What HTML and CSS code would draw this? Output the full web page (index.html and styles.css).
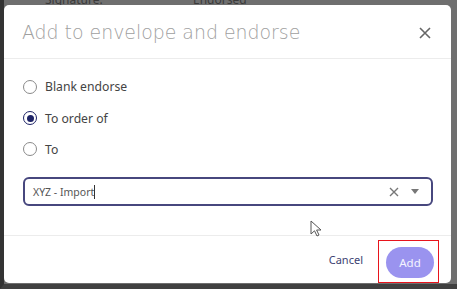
FILE: index.html
```html
<!DOCTYPE html>
<html lang="en">
<head>
    <meta charset="UTF-8">
    <meta name="viewport" content="width=device-width, initial-scale=1.0">
    <title>Add to envelope and endorse</title>
    <link rel="stylesheet" href="styles.css">
</head>
<body>
    <div class="page">
        <div class="page-row"><span class="page-label">Signature:</span><span class="page-value">Endorsed</span></div>
    </div>

    <div class="dialog">
        <div class="dialog-header">
            <h2 class="dialog-title">Add to envelope and endorse</h2>
            <svg class="close" width="12" height="12" viewBox="0 0 12 12"><path d="M1 1L11 11M11 1L1 11" stroke="#666" stroke-width="1.6"/></svg>
        </div>
        <div class="dialog-body">
            <label class="radio"><span class="dot"></span>Blank endorse</label>
            <label class="radio checked"><span class="dot"></span>To order of</label>
            <label class="radio"><span class="dot"></span>To</label>
            <div class="select">
                <span class="select-text">XYZ - Import<span class="caret"></span></span>
                <svg class="clear" width="10" height="10" viewBox="0 0 10 10"><path d="M1 1L9 9M9 1L1 9" stroke="#777" stroke-width="1.4"/></svg>
                <svg class="arrow" width="8" height="5" viewBox="0 0 8 5"><path d="M0 0H8L4 5Z" fill="#777"/></svg>
            </div>
        </div>
        <div class="dialog-footer">
            <button class="btn-cancel">Cancel</button>
            <div class="highlight"><button class="btn-add">Add</button></div>
        </div>
    </div>

    <svg class="cursor" width="12" height="17" viewBox="0 0 12 17"><path d="M1 1V14L4.5 10.8L7 16L9 15L6.6 10H11Z" fill="#fff" stroke="#555" stroke-width="1"/></svg>
</body>
</html>
```

FILE: styles.css
```css
html, body { margin: 0; height: 100%; }
body { background: #6f6f6f; font-family: 'Noto Sans', sans-serif; overflow: hidden; position: relative; border-left: 4px solid #333; border-bottom: 5px solid #404040; box-sizing: border-box; }
.page { padding-left: 41px; }
.page-row { display: flex; margin-top: -9px; font-size: 12px; color: #3a3a3a; }
.page-label { width: 148px; }
.dialog { position: absolute; left: 0; top: 5px; width: 447px; height: 278px; background: #fff; border-radius: 5px; display: flex; flex-direction: column; }
.dialog-header { height: 53px; border-bottom: 1px solid #ececec; display: flex; align-items: center; justify-content: space-between; padding: 0 20px 0 18px; }
.dialog-title { margin: 0; font-family: 'DejaVu Sans', sans-serif; font-weight: 200; font-size: 18.9px; color: #a0a0a0; }
.close { margin-top: 2px; }
.dialog-body { flex: 1; padding: 12px 18px 0 19px; display: flex; flex-direction: column; }
.radio { display: flex; align-items: center; height: 31.4px; font-size: 12.2px; color: #444; gap: 8px; }
.dot { width: 14px; height: 14px; border: 1.7px solid #8a8a8a; border-radius: 50%; box-sizing: border-box; display: flex; align-items: center; justify-content: center; }
.checked .dot { border-color: #1d2366; }
.checked .dot::after { content: ''; width: 7px; height: 7px; border-radius: 50%; background: #1d2366; }
.select { margin-top: 12px; height: 29px; border: 2px solid #47477e; border-radius: 6px; box-sizing: border-box; display: flex; align-items: center; padding: 0 12px 0 8px; }
.select-text { flex: 1; font-size: 10.5px; color: #555; display: flex; align-items: center; }
.caret { width: 1px; height: 14px; background: #333; }
.clear { margin-right: 12px; }
.dialog-footer { height: 47px; margin-top: auto; border-top: 1px solid #ececec; display: flex; align-items: center; justify-content: flex-end; padding-right: 12px; }
.btn-cancel { background: none; border: none; font-family: 'Noto Sans', sans-serif; font-size: 11px; color: #3d3f72; margin-right: 15px; padding: 0; }
.highlight { border: 1px solid #e8141c; padding: 6px 4px 4px 7px; margin-top: 3px; }
.btn-add { width: 48px; height: 31px; border: none; border-radius: 16px; background: #9a93ef; color: #f4f3ff; font-family: 'Noto Sans', sans-serif; font-size: 11.5px; }
.cursor { position: absolute; left: 306px; top: 220px; }
```
